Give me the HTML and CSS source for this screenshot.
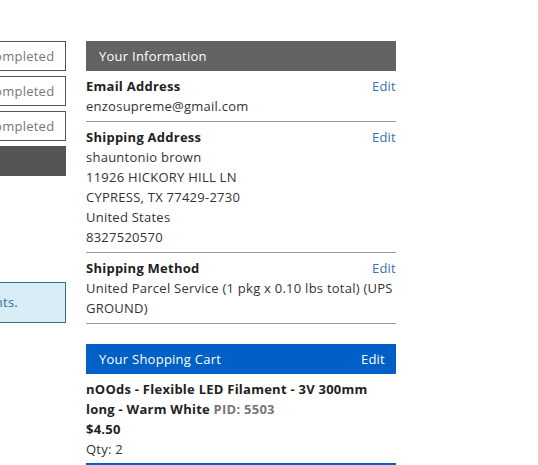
FILE: index.html
```html
<!DOCTYPE html>
<html>
<head>
<meta charset="utf-8">
<link rel="stylesheet" href="styles.css">
</head>
<body>
<div class="page">
  <div class="steps">
    <div class="step">Completed</div>
    <div class="step">Completed</div>
    <div class="step">Completed</div>
    <div class="step step-active"></div>
    <div class="notice"><span>Please review your order and comments.</span></div>
  </div>
  <div class="summary">
    <div class="head head-gray">Your Information</div>
    <div class="block">
      <div class="row"><span class="label">Email Address</span><a class="edit">Edit</a></div>
      <div class="val">enzosupreme@gmail.com</div>
    </div>
    <div class="block">
      <div class="row"><span class="label">Shipping Address</span><a class="edit">Edit</a></div>
      <div class="val">shauntonio brown</div>
      <div class="val">11926 HICKORY HILL LN</div>
      <div class="val">CYPRESS, TX 77429-2730</div>
      <div class="val">United States</div>
      <div class="val">8327520570</div>
    </div>
    <div class="block">
      <div class="row"><span class="label">Shipping Method</span><a class="edit">Edit</a></div>
      <div class="val">United Parcel Service (1 pkg x 0.10 lbs total) (UPS GROUND)</div>
    </div>
    <div class="head head-blue"><span>Your Shopping Cart</span><a class="head-edit">Edit</a></div>
    <div class="item">
      <div class="item-name">nOOds - Flexible LED Filament - 3V 300mm long - Warm White <span class="pid">PID: 5503</span></div>
      <div class="price">$4.50</div>
      <div class="val">Qty: 2</div>
    </div>
  </div>
</div>
</body>
</html>
```
FILE: styles.css
```css
html, body {
  margin: 0;
  padding: 0;
  background: #fff;
  overflow: hidden;
}
body {
  font-family: "Open Sans", "Liberation Sans", sans-serif;
  font-size: 13px;
  letter-spacing: 0.25px;
  color: #222;
}
.page {
  display: flex;
  gap: 20px;
  padding-top: 41px;
  margin-left: -84px;
}
.steps {
  width: 150px;
  display: flex;
  flex-direction: column;
  gap: 5px;
  flex-shrink: 0;
}
.step {
  height: 28px;
  border: 1px solid #555;
  color: #777;
  text-align: center;
  line-height: 29px;
  padding-left: 58px;
}
.step-active {
  background: #555;
  border-color: #555;
}
.notice {
  margin-top: 101px;
  height: 39px;
  background: #d9edf7;
  border: 1px solid #31708f;
  color: #31708f;
  line-height: 39px;
  white-space: nowrap;
  overflow: hidden;
  display: flex;
  justify-content: flex-end;
  padding-right: 47px;
}
.notice span {
  flex-shrink: 0;
}
.summary {
  width: 310px;
  flex-shrink: 0;
}
.head {
  height: 30px;
  line-height: 30px;
  color: #fff;
  padding: 0 11px 0 13px;
  display: flex;
  justify-content: space-between;
}
.head-gray {
  background: #636363;
}
.head-blue {
  background: #0060c6;
  margin-top: 20px;
}
.head-edit {
  color: #fff;
}
.block {
  border-bottom: 1px solid #999;
  padding: 5px 0 5px;
}
.row {
  display: flex;
  justify-content: space-between;
  line-height: 20px;
}
.label {
  font-weight: 700;
  color: #222;
}
.edit {
  color: #3b6fb6;
}
.val {
  line-height: 20px;
  color: #333;
}
.item {
  padding: 5px 0 4px;
  border-bottom: 2px solid #0060c6;
}
.item-name {
  font-weight: 700;
  line-height: 20px;
  color: #222;
}
.pid {
  color: #777;
}
.price {
  font-weight: 700;
  line-height: 20px;
}
```
